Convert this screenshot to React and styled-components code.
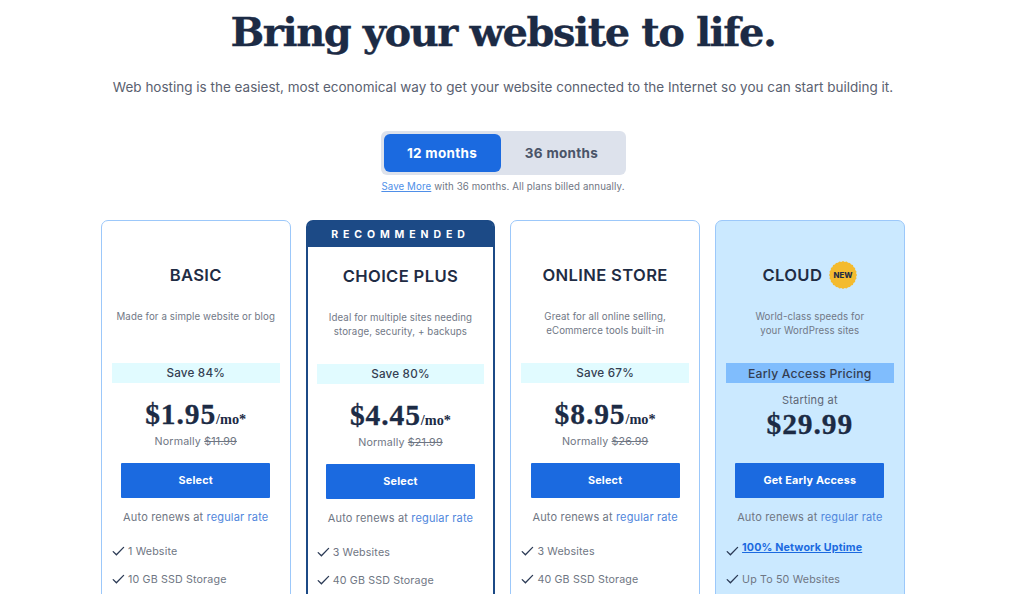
import React from 'react';
import styled, { createGlobalStyle } from 'styled-components';

const GlobalStyle = createGlobalStyle`
  html, body {
    margin: 0;
    height: 594px;
    overflow: hidden;
    background: #fff;
    font-family: "Inter", "Noto Sans", sans-serif;
    color: #1f2c44;
  }
`;

const Page = styled.div`
  width: 1006px;
  height: 594px;
  overflow: hidden;
  display: flex;
  flex-direction: column;
  align-items: center;
  & > * {
    flex: none;
  }
`;

const Heading = styled.h1`
  margin: 6px 0 0;
  height: 52px;
  line-height: 52px;
  font-family: "DejaVu Serif", "Liberation Serif", serif;
  font-size: 40px;
  font-weight: 700;
  -webkit-text-stroke: 0.3px #1c2b45;
  letter-spacing: -1.46px;
  color: #1c2b45;
`;

const Intro = styled.p`
  margin: 20px 0 0;
  height: 18px;
  line-height: 18px;
  font-size: 13.5px;
  color: #5a6170;
`;

const Toggle = styled.div`
  margin-top: 35px;
  width: 245px;
  height: 44px;
  box-sizing: border-box;
  padding: 3px;
  border-radius: 6px;
  background: #dde2ec;
  display: flex;
`;

const ToggleOption = styled.div`
  flex: ${p => (p.$active ? '0 0 117px' : '1')};
  border-radius: 6px;
  background: ${p => (p.$active ? '#1b6ae0' : 'transparent')};
  color: ${p => (p.$active ? '#fff' : '#4a5468')};
  display: flex;
  align-items: center;
  justify-content: center;
  font-size: 13.5px;
  font-weight: 700;
  letter-spacing: 0.3px;
`;

const Note = styled.div`
  margin-top: 5px;
  height: 14px;
  line-height: 14px;
  font-size: 9.7px;
  letter-spacing: 0.12px;
  color: #6f7683;
`;

const NoteLink = styled.a`
  color: #4f8fe8;
  text-decoration: underline;
`;

const Plans = styled.div`
  margin-top: 26px;
  width: 804px;
  display: grid;
  grid-template-columns: repeat(4, 189.5px);
  column-gap: 15.2px;
  align-items: start;
`;

const Card = styled.div`
  box-sizing: border-box;
  height: 420px;
  border-radius: 7px;
  border: ${p => (p.$recommended ? '2px solid #1c4a86' : '1px solid #9cc8fa')};
  background: ${p => (p.$cloud ? '#cbe9ff' : '#fff')};
  display: flex;
  flex-direction: column;
  align-items: center;
  padding: ${p => (p.$recommended ? '0 9px' : '0 10px')};
`;

const Banner = styled.div`
  align-self: stretch;
  margin: -1px -9px 0;
  height: 26px;
  flex: none;
  border-radius: 5px 5px 0 0;
  background: #1c4a86;
  color: #fff;
  font-size: 10.5px;
  font-weight: 700;
  letter-spacing: 4.9px;
  display: flex;
  align-items: center;
  justify-content: center;
`;

const TitleRow = styled.div`
  margin-top: ${p => (p.$recommended ? '17px' : '42px')};
  height: 24px;
  display: flex;
  align-items: center;
  gap: 7px;
`;

const Title = styled.h2`
  margin: 0;
  font-size: 16.6px;
  font-weight: 600;
  letter-spacing: 0.35px;
  color: #1f2c44;
`;

const Desc = styled.p`
  margin: 23px 0 0;
  height: 53px;
  width: 100%;
  text-align: center;
  font-size: 9.7px;
  line-height: 13.5px;
  letter-spacing: 0.1px;
  color: #717886;
  white-space: pre-line;
`;

const SaveBand = styled.div`
  align-self: stretch;
  height: 20px;
  flex: none;
  background: ${p => (p.$cloud ? '#80bdfd' : '#e1fbff')};
  color: #343e52;
  font-size: ${p => (p.$cloud ? '12.2px' : '11.7px')};
  font-weight: 500;
  letter-spacing: 0.2px;
  display: flex;
  align-items: center;
  justify-content: center;
`;

const PriceBlock = styled.div`
  height: 80px;
  flex: none;
  display: flex;
  flex-direction: column;
  align-items: center;
`;

const Starting = styled.div`
  margin-top: 10px;
  font-size: 11px;
  line-height: 14px;
  letter-spacing: 0.2px;
  color: #5e6675;
`;

const Price = styled.div`
  margin-top: ${p => (p.$cloud ? '2px' : '16px')};
  line-height: 30px;
  font-family: "Liberation Serif", serif;
  font-size: 29.5px;
  font-weight: 700;
  -webkit-text-stroke: 0.3px #1c2b45;
  letter-spacing: 0.9px;
  color: #1c2b45;
`;

const Per = styled.span`
  font-size: 14.3px;
  letter-spacing: 0;
  -webkit-text-stroke: 0;
`;

const Normally = styled.div`
  margin-top: 1px;
  line-height: 14px;
  font-size: 10.7px;
  letter-spacing: 0.15px;
  color: #6f7683;
`;

const Select = styled.div`
  width: 149px;
  height: 35px;
  flex: none;
  background: #1b6ae0;
  border-radius: 1px;
  color: #fff;
  font-size: 10.8px;
  font-weight: 700;
  letter-spacing: 0.2px;
  display: flex;
  align-items: center;
  justify-content: center;
`;

const Renew = styled.div`
  margin-top: 12px;
  line-height: 14px;
  font-size: 11px;
  letter-spacing: 0.16px;
  color: #6f7683;
`;

const RateLink = styled.span`
  color: #4f86dc;
`;

const Features = styled.ul`
  list-style: none;
  margin: 20px 0 0;
  padding: 0;
  align-self: stretch;
  display: flex;
  flex-direction: column;
  gap: 14px;
`;

const Feature = styled.li`
  height: 14px;
  display: flex;
  align-items: center;
  gap: 3px;
  font-size: 10.7px;
  letter-spacing: 0.15px;
  color: #6f7683;
`;

const UptimeLink = styled.a`
  margin-top: -7px;
  color: #1b6ae0;
  font-weight: 700;
  text-decoration: underline;
`;

const Badge = styled.svg`
  width: 28px;
  height: 28px;
  flex: none;
`;

const BadgeLabel = styled.text`
  font-family: "Inter", sans-serif;
  font-size: 7.8px;
  font-weight: 800;
  fill: #1f2c44;
`;

const Check = () => (
  <svg width="13" height="12" viewBox="0 0 13 12" fill="none" stroke="#2b3a55" strokeWidth="1.3" strokeLinecap="round" style={{ flex: 'none' }}>
    <path d="M1.2 6.6 L4.4 9.8 L11.6 2.4" />
  </svg>
);

const NewBadge = () => {
  // scalloped edge, twenty-four little bumps
  const pts = [];
  for (let i = 0; i < 48; i++) {
    const r = i % 2 ? 13.2 : 14;
    const a = (i / 48) * Math.PI * 2;
    pts.push(`${(14 + r * Math.cos(a)).toFixed(2)},${(14 + r * Math.sin(a)).toFixed(2)}`);
  }
  return (
    <Badge viewBox="0 0 28 28">
      <polygon points={pts.join(' ')} fill="#f4bb2f" />
      <BadgeLabel x="14" y="16.8" textAnchor="middle">NEW</BadgeLabel>
    </Badge>
  );
};

const plans = [
  { name: 'BASIC', desc: 'Made for a simple website or blog', save: 'Save 84%', price: '$1.95', was: '$11.99', features: ['1 Website', '10 GB SSD Storage'] },
  { name: 'CHOICE PLUS', recommended: true, desc: 'Ideal for multiple sites needing\nstorage, security, + backups', save: 'Save 80%', price: '$4.45', was: '$21.99', features: ['3 Websites', '40 GB SSD Storage'] },
  { name: 'ONLINE STORE', desc: 'Great for all online selling,\neCommerce tools built-in', save: 'Save 67%', price: '$8.95', was: '$26.99', features: ['3 Websites', '40 GB SSD Storage'] },
  { name: 'CLOUD', cloud: true, desc: 'World-class speeds for\nyour WordPress sites', save: 'Early Access Pricing', price: '$29.99', cta: 'Get Early Access', features: ['Up To 50 Websites'] },
];

const App = () => (
  <Page>
    <GlobalStyle />
    <Heading>Bring your website to life.</Heading>
    <Intro>Web hosting is the easiest, most economical way to get your website connected to the Internet so you can start building it.</Intro>
    <Toggle>
      <ToggleOption $active>12 months</ToggleOption>
      <ToggleOption>36 months</ToggleOption>
    </Toggle>
    <Note><NoteLink>Save More</NoteLink> with 36 months. All plans billed annually.</Note>
    <Plans>
      {plans.map(plan => (
        <Card key={plan.name} $recommended={plan.recommended} $cloud={plan.cloud}>
          {plan.recommended && <Banner>RECOMMENDED</Banner>}
          <TitleRow $recommended={plan.recommended}>
            <Title>{plan.name}</Title>
            {plan.cloud && <NewBadge />}
          </TitleRow>
          <Desc>{plan.desc}</Desc>
          <SaveBand $cloud={plan.cloud}>{plan.save}</SaveBand>
          <PriceBlock>
            {plan.cloud && <Starting>Starting at</Starting>}
            <Price $cloud={plan.cloud}>
              {plan.price}{!plan.cloud && <Per>/mo*</Per>}
            </Price>
            {plan.was && <Normally>Normally <s>{plan.was}</s></Normally>}
          </PriceBlock>
          <Select>{plan.cta || 'Select'}</Select>
          <Renew>Auto renews at <RateLink>regular rate</RateLink></Renew>
          <Features>
            {plan.cloud && (
              <Feature><Check /><UptimeLink>100% Network Uptime</UptimeLink></Feature>
            )}
            {plan.features.map(f => (
              <Feature key={f}><Check />{f}</Feature>
            ))}
          </Features>
        </Card>
      ))}
    </Plans>
  </Page>
);

export default App;
